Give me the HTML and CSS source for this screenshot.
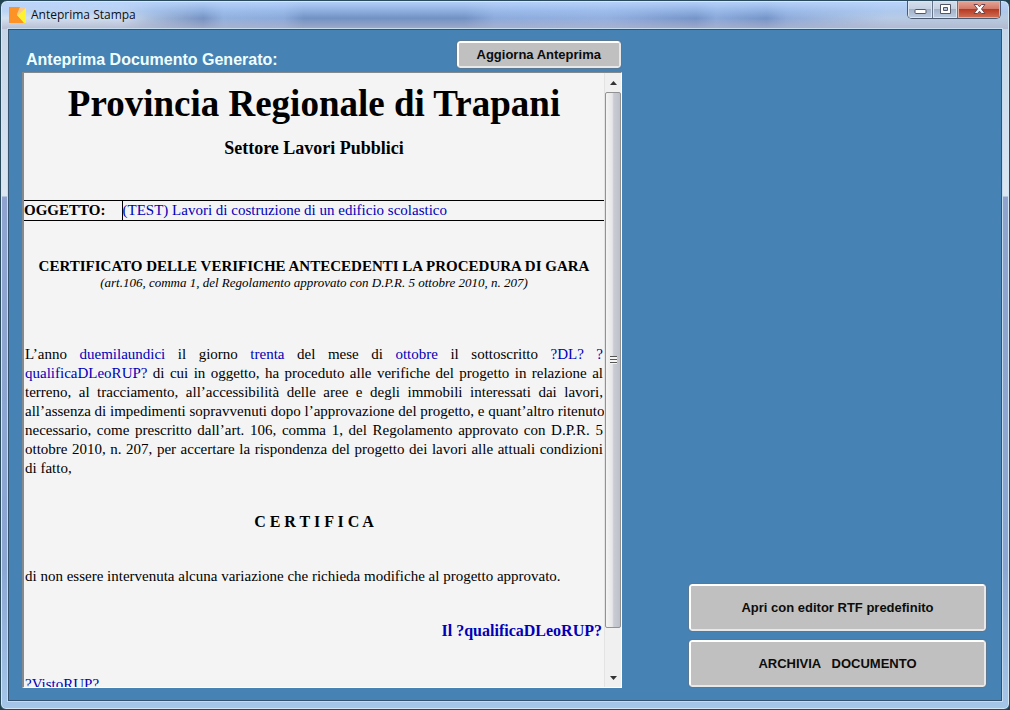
FILE: index.html
```html
<!DOCTYPE html>
<html lang="it">
<head>
<meta charset="utf-8">
<title>Anteprima Stampa</title>
<link rel="stylesheet" href="styles.css">
</head>
<body>
<div class="window">
  <header class="titlebar">
    <svg class="app-icon" width="17" height="16" viewBox="0 0 17 16" aria-hidden="true">
      <path d="M0 0H16L8 8L16 16H0Z" fill="#fd9226"/>
      <path d="M17 0V16H15L8 8L15 0Z" fill="#fff22e"/>
      <path d="M11 0H17V1L9 8L8 7Z" fill="#fcc98a"/>
    </svg>
    <h1 class="window-title">Anteprima Stampa</h1>
    <div class="window-controls">
      <button class="control" type="button" aria-label="Riduci a icona">
        <svg width="13" height="11" viewBox="0 0 13 11"><rect x="1" y="5.5" width="11" height="4" rx="1" fill="#fff" stroke="#535666"/></svg>
      </button>
      <button class="control" type="button" aria-label="Ingrandisci">
        <svg width="13" height="11" viewBox="0 0 13 11"><path d="M1.500.5h10v9h-10z" fill="#fff" stroke="#535666"/><path d="M4.500 3.500h4v3h-4z" fill="#b5c6de" stroke="#535666"/></svg>
      </button>
      <button class="control control-close" type="button" aria-label="Chiudi">
        <svg width="13" height="11" viewBox="0 0 13 11"><path d="M1 .5h3.500l2 2.300 2-2.300H12L8.500 5l3.500 4.500H8.500l-2-2.300-2 2.300H1L4.500 5z" fill="#fff" stroke="#6b4650"/></svg>
      </button>
    </div>
  </header>
  <main class="client">
    <section class="preview">
      <div class="preview-head">
        <h2 class="preview-label">Anteprima Documento Generato:</h2>
        <button class="button button-small" type="button">Aggiorna Anteprima</button>
      </div>
      <div class="viewer">
        <article class="document">
          <h3 class="doc-title">Provincia Regionale di Trapani</h3>
          <p class="doc-subtitle">Settore Lavori Pubblici</p>
          <table class="subject">
            <tr><th scope="row">OGGETTO:</th><td class="field">(TEST) Lavori di costruzione di un edificio scolastico</td></tr>
          </table>
          <h4 class="doc-heading">CERTIFICATO DELLE VERIFICHE ANTECEDENTI LA PROCEDURA DI GARA</h4>
          <p class="doc-reference">(art.106, comma 1, del Regolamento approvato con D.P.R. 5 ottobre 2010, n. 207)</p>
          <p class="doc-body">L’anno <span class="field">duemilaundici</span> il giorno <span class="field">trenta</span> del mese di <span class="field">ottobre</span> il sottoscritto <span class="field">?DL?</span> <span class="field">?</span><br>
            <span class="field">qualificaDLeoRUP?</span> di cui in oggetto, ha proceduto alle verifiche del progetto in relazione al<br>
            terreno, al tracciamento, all’accessibilità delle aree e degli immobili interessati dai lavori,<br>
            all’assenza di impedimenti sopravvenuti dopo l’approvazione del progetto, e quant’altro ritenuto<br>
            necessario, come prescritto dall’art. 106, comma 1, del Regolamento approvato con D.P.R. 5<br>
            ottobre 2010, n. 207, per accertare la rispondenza del progetto dei lavori alle attuali condizioni</p>
          <p class="doc-body-end">di fatto,</p>
          <p class="doc-certify">C E R T I F I C A</p>
          <p class="doc-statement">di non essere intervenuta alcuna variazione che richieda modifiche al progetto approvato.</p>
          <p class="doc-signature field">Il ?qualificaDLeoRUP?</p>
          <p class="doc-visa field">?VistoRUP?</p>
        </article>
        <div class="scrollbar">
          <button class="arrow" type="button" aria-label="Scorri su"><svg width="7" height="4" viewBox="0 0 7 4"><path d="M0 4L3.500 0L7 4Z" fill="#333"/></svg></button>
          <div class="track"><div class="thumb"><span class="grip"></span></div></div>
          <button class="arrow" type="button" aria-label="Scorri giù"><svg width="7" height="4" viewBox="0 0 7 4"><path d="M0 0L3.500 4L7 0Z" fill="#333"/></svg></button>
        </div>
      </div>
    </section>
    <aside class="actions">
      <button class="button" type="button">Apri con editor RTF predefinito</button>
      <button class="button" type="button">ARCHIVIA   DOCUMENTO</button>
    </aside>
  </main>
</div>
</body>
</html>
```
FILE: styles.css
```css
* { box-sizing: border-box; }

body {
  margin: 0;
  background: #20444f;
}

h1, h2, h3, h4, p { margin: 0; }

.window {
  display: flex;
  flex-direction: column;
  height: 100vh;
  padding: 0 7px 8px;
  border: 1px solid #29495c;
  border-radius: 7px 7px 6px 6px;
  box-shadow: inset 0 0 0 1px #d3e8f5;
  background: linear-gradient(#c3d2e6 0, #dbe6f2 195px, #8fa3ce 196px, #8ba6d3 80%, #a5c6e8 100%);
}

.titlebar {
  display: flex;
  align-items: flex-start;
  flex: none;
  height: 27px;
  margin: 1px -6px 0;
  padding-left: 7px;
  border-radius: 6px 6px 0 0;
  background:
    linear-gradient(rgba(185, 212, 252, 0.9) 0, rgba(165, 198, 245, 0.5) 35%, transparent 60%, rgba(176, 178, 200, 0.75) 100%),
    linear-gradient(90deg, #d4e1f0 0, #cddcee 12%, #a6bcdc 15%, #7693c2 20%, #93b1de 22%, #8cabdb 28%, #7292c4 30%, #7292c4 46%, #8dabdc 49%, #94b0e0 60%, #7594c8 69%, #8ba9da 71%, #7594c8 76%, #8fabd9 78%, #b7cbe6 88%, #b9cbe0 100%);
}

.app-icon { margin-top: 5px; }

.window-title {
  margin: 4px 0 0 5px;
  font: 12px/18px "Open Sans", "Noto Sans", sans-serif;
  color: #0b0f18;
}

.window-controls {
  display: flex;
  height: 18px;
  margin: -1px 7px 0 auto;
  border: 1px solid #4b5a70;
  border-top: 0;
  border-radius: 0 0 5px 5px;
  overflow: hidden;
}

.control {
  display: flex;
  align-items: center;
  justify-content: center;
  width: 25px;
  padding: 0;
  border: 0;
  border-right: 1px solid #65748b;
  background: linear-gradient(#d6e0ed 0, #c4d1e2 45%, #a1b2ca 50%, #bdcce0 100%);
  box-shadow: inset 0 0 0 1px #dbe5f0;
}

.control-close {
  width: 42px;
  border-right: 0;
  background: linear-gradient(#e5a697 0, #d3796a 45%, #b83a22 50%, #cf7258 100%);
  box-shadow: inset 0 0 0 1px #e3ac9e;
}

.client {
  display: grid;
  grid-template-columns: minmax(0, 600fr) minmax(0, 297fr);
  column-gap: 67px;
  flex: 1;
  min-height: 0;
  padding: 11px 15px 12px 13px;
  border: 1px solid #35536f;
  outline: 1px solid #c5dcef;
  background: #4682b4;
}

.preview {
  display: flex;
  flex-direction: column;
  min-height: 0;
}

.preview-head {
  display: flex;
  justify-content: space-between;
  align-items: flex-start;
  height: 31px;
  padding: 0 1px 0 4px;
}

.preview-label {
  padding-top: 9px;
  font: bold 16px/20px "Liberation Sans", Arial, sans-serif;
  color: #f0ffff;
}

.button {
  height: 47px;
  border: 2px solid #f4f4f4;
  border-color: #fff #e8e8e8 #e8e8e8 #fff;
  border-radius: 3px;
  outline: 1px solid #587894;
  background: #c0c0c0;
  font: bold 13px/18px "Liberation Sans", Arial, sans-serif;
  color: #0c0c0c;
  white-space: pre;
}

.button-small {
  height: 27px;
  padding: 0 18px;
}

.actions {
  display: flex;
  flex-direction: column;
  justify-content: flex-end;
  gap: 9px;
  padding-bottom: 1px;
}

.viewer {
  display: flex;
  flex: 1;
  min-height: 0;
  border: 1px solid #fff;
  border-top: 1px solid #84898c;
  border-left: 2px solid #858a8e;
  background: #f4f4f4;
}

.document {
  flex: 1;
  min-width: 0;
  overflow: hidden;
  font: 15px/19px "Liberation Serif", "Times New Roman", serif;
  color: #000;
}

.field { color: #0000b8; }

.doc-title {
  padding-top: 10px;
  font-size: 37px;
  line-height: 42px;
  text-align: center;
}

.doc-subtitle {
  margin-top: 13px;
  font-size: 18px;
  font-weight: bold;
  line-height: 20px;
  text-align: center;
}

.subject {
  width: 100%;
  margin-top: 42px;
  border-collapse: collapse;
  border-top: 1px solid #000;
  border-bottom: 1px solid #000;
}

.subject th {
  width: 98px;
  padding: 0;
  border-right: 1px solid #000;
  text-align: left;
}

.subject td { padding: 0; }

.doc-heading {
  margin-top: 36px;
  font-size: 15px;
  line-height: 18px;
  text-align: center;
  white-space: nowrap;
}

.doc-reference {
  font-size: 13px;
  font-style: italic;
  line-height: 15px;
  text-align: center;
}

.doc-body {
  margin-top: 55px;
  padding: 0 1px;
  text-align: justify;
  text-align-last: justify;
  white-space: nowrap;
}

.doc-body-end { padding-left: 1px; }

.doc-certify {
  margin-top: 34px;
  font-size: 16px;
  font-weight: bold;
  text-align: center;
}

.doc-statement {
  margin-top: 36px;
  padding-left: 1px;
}

.doc-signature {
  margin-top: 35px;
  padding-right: 2px;
  font-size: 16px;
  font-weight: bold;
  text-align: right;
}

.doc-visa {
  margin-top: 35px;
  padding-left: 1px;
}

.scrollbar {
  display: flex;
  flex-direction: column;
  flex: none;
  width: 17px;
  border-left: 1px solid #e3e3e3;
  background: #f0f0f0;
}

.arrow {
  display: flex;
  align-items: center;
  justify-content: center;
  height: 19px;
  padding: 0;
  border: 0;
  background: none;
}

.track {
  flex: 1;
  min-height: 0;
}

.thumb {
  display: flex;
  align-items: center;
  justify-content: center;
  height: 93%;
  border: 1px solid #929292;
  border-radius: 2px;
  background: linear-gradient(90deg, #f4f4f4 0, #e6e6e8 45%, #c9ccd3 55%, #bcc0c9 100%);
}

.grip {
  width: 7px;
  height: 8px;
  background: repeating-linear-gradient(#555 0, #555 1px, #f4f4f4 1px, #f4f4f4 3px);
}
```
